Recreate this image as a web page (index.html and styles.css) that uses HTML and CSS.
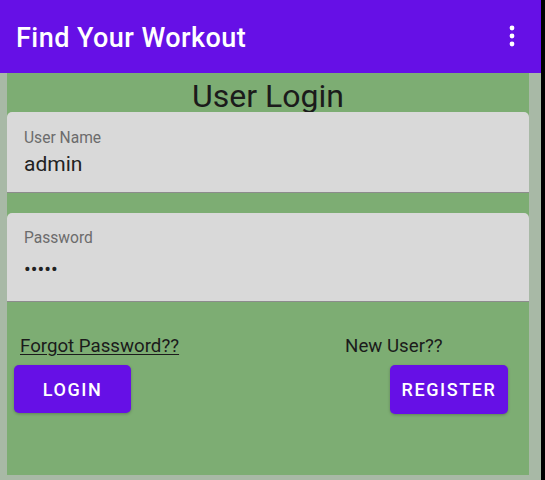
FILE: index.html
```html
<!DOCTYPE html>
<html>
<head>
<meta charset="utf-8">
<link rel="stylesheet" href="styles.css">
</head>
<body>
<div class="screen">
  <header class="appbar">
    <span class="appbar-title">Find Your Workout</span>
    <svg class="menu" width="10" height="24" viewBox="0 0 10 24"><circle cx="5" cy="4" r="2.4" fill="#fff"/><circle cx="5" cy="12" r="2.4" fill="#fff"/><circle cx="5" cy="20" r="2.4" fill="#fff"/></svg>
  </header>
  <main class="panel">
    <div class="title">User Login</div>
    <div class="field field-user">
      <div class="label">User Name</div>
      <div class="value">admin</div>
    </div>
    <div class="field field-pass">
      <div class="label">Password</div>
      <div class="value dots">•••••</div>
    </div>
    <div class="links">
      <span class="forgot">Forgot Password??</span>
      <span class="newuser">New User??</span>
    </div>
    <div class="buttons">
      <button class="btn btn-login">LOGIN</button>
      <button class="btn btn-register">REGISTER</button>
    </div>
  </main>
</div>
</body>
</html>
```
FILE: styles.css
```css
html, body {
  margin: 0;
  padding: 0;
  background: #000;
  font-family: Roboto, "Noto Sans", sans-serif;
}
.screen {
  width: 541px;
  height: 480px;
  background: #a8b9a6;
  overflow: hidden;
}
.appbar {
  height: 73px;
  background: #6610e6;
  display: flex;
  align-items: center;
  justify-content: space-between;
  padding: 0 24px 0 16px;
  box-sizing: border-box;
}
.appbar-title {
  color: #fff;
  font-size: 27px;
  font-weight: 500;
  letter-spacing: 0.45px;
  margin-top: 2px;
}
.menu {
  display: block;
  margin-top: -1px;
}
.panel {
  margin-left: 7px;
  width: 522px;
  height: 402px;
  background: #7dad73;
  display: flex;
  flex-direction: column;
}
.title {
  height: 39px;
  box-sizing: border-box;
  padding-top: 4px;
  line-height: 38px;
  overflow: hidden;
  text-align: center;
  font-size: 32px;
  color: #1b1b1b;
  white-space: nowrap;
}
.field {
  background: #d9d9d9;
  border-radius: 5px 5px 0 0;
  border-bottom: 1px solid #8c8c8c;
  box-sizing: border-box;
  padding-left: 17px;
  padding-top: 16px;
}
.field-user {
  height: 81px;
}
.field-pass {
  height: 89px;
  margin-top: 20px;
  padding-top: 15px;
}
.label {
  font-size: 15.6px;
  line-height: 20px;
  color: #6c6c6c;
}
.value {
  font-size: 21px;
  line-height: 28px;
  color: #222;
  margin-top: 2px;
}
.dots {
  margin-top: 7px;
  font-size: 20px;
  letter-spacing: 0px;
  color: #222;
}
.links {
  margin-top: 32px;
  height: 24px;
  line-height: 24px;
  font-size: 18.7px;
  color: #1b1b1b;
  display: flex;
}
.forgot {
  margin-left: 13px;
  text-decoration: underline;
  text-underline-offset: 2px;
}
.newuser {
  margin-left: 166px;
}
.buttons {
  margin-top: 7px;
  display: flex;
  justify-content: space-between;
  align-items: flex-start;
  padding: 0 21px 0 7px;
}
.btn {
  border: none;
  background: #6610e6;
  color: #fff;
  font-family: Roboto, "Noto Sans", sans-serif;
  font-size: 18px;
  font-weight: 500;
  letter-spacing: 1.6px;
  border-radius: 5px;
  box-shadow: 0 1px 3px rgba(0,0,0,0.25);
  padding: 0;
}
.btn-login {
  width: 117px;
  height: 48px;
}
.btn-register {
  width: 118px;
  height: 49px;
}
```
